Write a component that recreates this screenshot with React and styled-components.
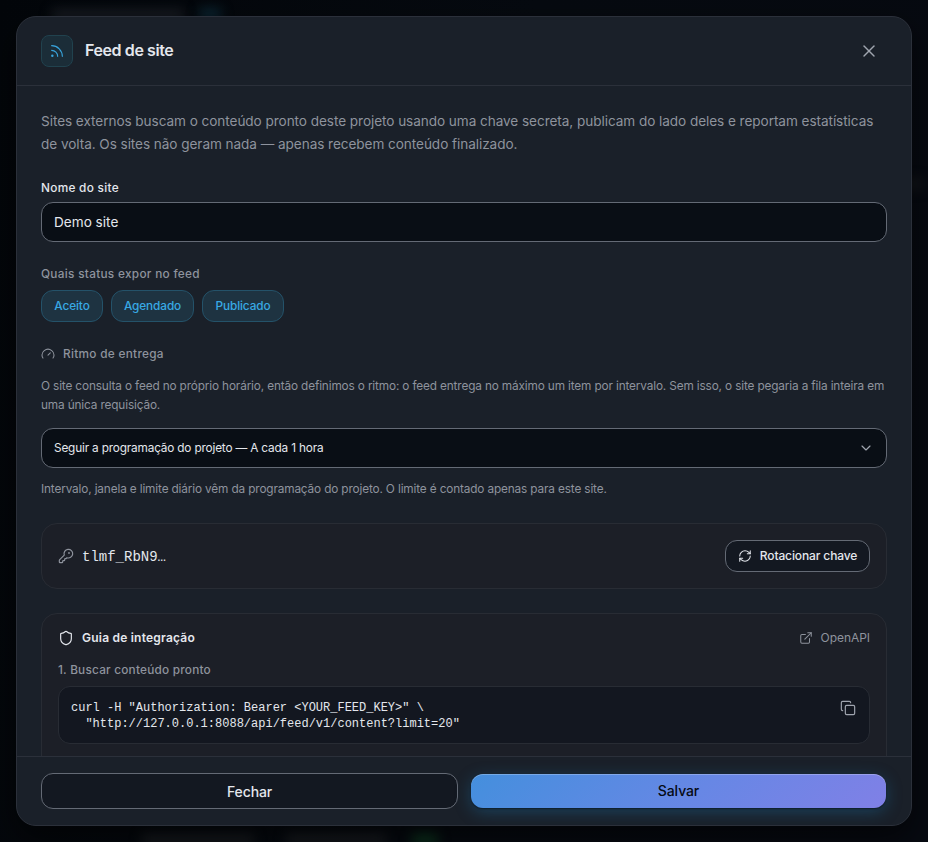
import styled, { createGlobalStyle, css } from "styled-components";
import {
  ChevronDown,
  Copy,
  ExternalLink,
  Gauge,
  KeyRound,
  RefreshCw,
  Rss,
  Shield,
  X,
} from "lucide-react";

const GlobalStyle = createGlobalStyle`
  * {
    box-sizing: border-box;
  }

  body {
    margin: 0;
    background-color: #05080e;
    color: #e4e7ed;
    font-family: Inter, "Liberation Sans", sans-serif;
    -webkit-font-smoothing: antialiased;
  }

  p, h2, h3, pre {
    margin: 0;
  }

  button, input {
    font-family: inherit;
  }
`;

const Backdrop = styled.div`
  position: relative;
  height: 842px;
  padding: 16px;
  overflow: hidden;
  background: linear-gradient(100deg, #03060a 0%, #060a10 50%, #070a11 100%);
`;

const Smudge = styled.div`
  position: absolute;
  top: ${(props) => props.$top}px;
  left: ${(props) => props.$left}px;
  width: ${(props) => props.$width}px;
  height: 10px;
  background-color: ${(props) => props.$color};
  filter: blur(6px);
`;

const Dialog = styled.div`
  position: relative;
  display: flex;
  flex-direction: column;
  height: 810px;
  overflow: hidden;
  border: 1px solid #2b303a;
  border-radius: 20px;
  background-color: #1a2029;
  box-shadow: 0 12px 32px rgba(0, 0, 0, 0.6);
`;

const Header = styled.header`
  display: flex;
  flex-shrink: 0;
  align-items: center;
  gap: 12px;
  height: 69px;
  padding: 0 24px;
  border-bottom: 1px solid #2b303a;
`;

const IconTile = styled.span`
  display: grid;
  place-items: center;
  width: 32px;
  height: 32px;
  border: 1px solid #21424e;
  border-radius: 8px;
  background-color: #1b2d38;
  color: #38a4dc;
`;

const Title = styled.h2`
  flex: 1;
  padding-bottom: 2px;
  font-size: 16px;
  font-weight: 600;
  letter-spacing: -0.4px;
`;

const IconButton = styled.button`
  display: grid;
  place-items: center;
  width: 36px;
  height: 36px;
  padding: 0;
  border: none;
  background: none;
  color: #a0a5af;
`;

const Body = styled.div`
  display: flex;
  flex: 1;
  flex-direction: column;
  gap: 24px;
  min-height: 0;
  padding: 24px 24px 0;
  overflow: hidden;
`;

const Intro = styled.p`
  height: 46px;
  color: #8e939d;
  font-size: 13.6px;
  line-height: 23px;
  letter-spacing: -0.065px;
  white-space: nowrap;
`;

const Field = styled.div`
  display: flex;
  flex-direction: column;
  gap: ${(props) => props.$gap}px;
`;

const Label = styled.span`
  display: flex;
  align-items: center;
  gap: 8px;
  height: 16px;
  color: ${(props) => (props.$bright ? "#e4e7ed" : "#8e939d")};
  font-size: 11.8px;
  font-weight: 500;
  letter-spacing: 0.3px;
`;

const control = css`
  height: 40px;
  padding: 0 12px;
  border: 1px solid #646a75;
  border-radius: 12px;
  background-color: #090e15;
  color: #e4e7ed;
`;

const Input = styled.input`
  ${control}
  width: 100%;
  font-size: 13.6px;
`;

const Select = styled.button`
  ${control}
  display: flex;
  align-items: center;
  justify-content: space-between;
  font-size: 11.8px;
  letter-spacing: -0.17px;

  svg {
    color: #a0a5af;
  }
`;

const Chips = styled.div`
  display: flex;
  gap: 8px;
`;

const Chip = styled.button`
  width: ${(props) => props.$width}px;
  height: 32px;
  padding: 0;
  border: 1px solid #245269;
  border-radius: 12px;
  background-color: #1e3341;
  color: #38a9e4;
  font-size: 11.8px;
  font-weight: 500;
  letter-spacing: -0.1px;
`;

const Note = styled.p`
  color: #8e939d;
  font-size: 11.8px;
  line-height: 19.5px;
  letter-spacing: -0.143px;
  white-space: nowrap;
`;

const Rhythm = styled.div`
  display: flex;
  flex-direction: column;

  ${Note} {
    margin-top: 14.5px;
  }

  ${Select} {
    margin-top: 12.5px;
  }

  ${Select} + ${Note} {
    margin: 12px 0 -1px;
  }
`;

const Card = styled.section`
  flex-shrink: 0;
  padding: 16px;
  border: 1px solid #282c34;
  border-radius: 16px;
  background-color: #1c1f27;
`;

const KeyCard = styled(Card)`
  display: flex;
  align-items: center;
  gap: 8px;
  height: 66px;

  > svg {
    color: #8e939d;
  }
`;

const GuideCard = styled(Card)`
  padding-bottom: 40px;
`;

const KeyValue = styled.code`
  flex: 1;
  padding-top: 2px;
  font-family: "Liberation Mono", monospace;
  font-size: 14px;
`;

const OutlineButton = styled.button`
  display: flex;
  align-items: center;
  justify-content: center;
  gap: 8px;
  height: 32px;
  width: 145px;
  padding: 0;
  border: 1px solid #646a75;
  border-radius: 12px;
  background-color: #131821;
  color: #e4e7ed;
  font-size: 12px;
  font-weight: 500;
  letter-spacing: -0.12px;
  white-space: nowrap;
`;

const GuideHeader = styled.div`
  display: flex;
  align-items: center;
  gap: 8px;
  height: 16px;
`;

const GuideTitle = styled.h3`
  flex: 1;
  font-size: 12px;
  font-weight: 600;
  letter-spacing: 0.22px;
`;

const GuideLink = styled.a`
  display: flex;
  align-items: center;
  gap: 8px;
  color: #8e939d;
  font-size: 12px;
  letter-spacing: -0.05px;
`;

const Step = styled.p`
  margin: 16px 0 8px;
  color: #8e939d;
  font-size: 11.8px;
  font-weight: 500;
  line-height: 16px;
  letter-spacing: 0.22px;
`;

const CodeBlock = styled.div`
  display: flex;
  justify-content: space-between;
  height: 58px;
  padding: 12px 13px 12px 12px;
  border: 1px solid #282c34;
  border-radius: 12px;
  background-color: #131720;

  svg {
    margin: 1px 0 0;
    color: #a0a5af;
  }
`;

const Code = styled.pre`
  padding-top: 1px;
  font-family: "Liberation Mono", monospace;
  font-size: 12px;
  line-height: 16px;
`;

const Footer = styled.footer`
  display: grid;
  flex-shrink: 0;
  grid-template-columns: 417px 415px;
  gap: 13px;
  align-items: center;
  height: 69px;
  padding: 0 24px;
  border-top: 1px solid #2b303a;
`;

const CloseButton = styled(OutlineButton)`
  width: 100%;
  height: 36px;
  font-size: 14px;
`;

const SaveButton = styled.button`
  height: 34px;
  padding-bottom: 2px;
  border: none;
  border-radius: 12px;
  background: linear-gradient(135deg, #448fdd, #6787e5 55%, #8080e6);
  box-shadow:
    inset 0 1px 0 rgba(255, 255, 255, 0.25),
    0 1px 2px rgba(0, 0, 0, 0.5),
    0 4px 16px rgba(28, 130, 190, 0.35);
  color: #060b14;
  font-size: 14px;
  font-weight: 500;
  letter-spacing: -0.1px;
`;

const statuses = [
  { name: "Aceito", width: 62 },
  { name: "Agendado", width: 83 },
  { name: "Publicado", width: 82 },
];

const snippet = `curl -H "Authorization: Bearer <YOUR_FEED_KEY>" \\
  "http://127.0.0.1:8088/api/feed/v1/content?limit=20"`;

export default function App() {
  return (
    <>
      <GlobalStyle />
      <Backdrop>
        <Smudge $top={10} $left={52} $width={132} $color="#1b1f26" />
        <Smudge $top={9} $left={199} $width={22} $color="#0c2a38" />
        <Smudge $top={179} $left={900} $width={24} $color="#15171b" />
        <Smudge $top={834} $left={142} $width={112} $color="#1b1e22" />
        <Smudge $top={834} $left={286} $width={100} $color="#1b1e22" />
        <Smudge $top={834} $left={412} $width={26} $color="#0d3a20" />
        <Dialog role="dialog">
          <Header>
            <IconTile>
              <Rss size={16} strokeWidth={1.75} />
            </IconTile>
            <Title>Feed de site</Title>
            <IconButton aria-label="Fechar">
              <X size={20} strokeWidth={1.75} />
            </IconButton>
          </Header>
          <Body>
            <Intro>
              Sites externos buscam o conteúdo pronto deste projeto usando uma
              chave secreta, publicam do lado deles e reportam estatísticas
              <br />
              de volta. Os sites não geram nada — apenas recebem conteúdo
              finalizado.
            </Intro>
            <Field $gap={6}>
              <Label $bright>Nome do site</Label>
              <Input defaultValue="Demo site" />
            </Field>
            <Field $gap={8}>
              <Label>Quais status expor no feed</Label>
              <Chips>
                {statuses.map(({ name, width }) => (
                  <Chip key={name} $width={width}>
                    {name}
                  </Chip>
                ))}
              </Chips>
            </Field>
            <Rhythm>
              <Label>
                <Gauge size={14} strokeWidth={1.75} />
                Ritmo de entrega
              </Label>
              <Note>
                O site consulta o feed no próprio horário, então definimos o
                ritmo: o feed entrega no máximo um item por intervalo. Sem isso,
                o site pegaria a fila inteira em
                <br />
                uma única requisição.
              </Note>
              <Select>
                Seguir a programação do projeto — A cada 1 hora
                <ChevronDown size={16} strokeWidth={1.75} />
              </Select>
              <Note>
                Intervalo, janela e limite diário vêm da programação do projeto.
                O limite é contado apenas para este site.
              </Note>
            </Rhythm>
            <KeyCard>
              <KeyRound size={16} strokeWidth={1.75} />
              <KeyValue>tlmf_RbN9…</KeyValue>
              <OutlineButton>
                <RefreshCw size={14} strokeWidth={1.75} />
                Rotacionar chave
              </OutlineButton>
            </KeyCard>
            <GuideCard>
              <GuideHeader>
                <Shield size={16} strokeWidth={1.75} />
                <GuideTitle>Guia de integração</GuideTitle>
                <GuideLink>
                  <ExternalLink size={14} strokeWidth={1.75} />
                  OpenAPI
                </GuideLink>
              </GuideHeader>
              <Step>1. Buscar conteúdo pronto</Step>
              <CodeBlock>
                <Code>{snippet}</Code>
                <Copy size={16} strokeWidth={1.75} />
              </CodeBlock>
            </GuideCard>
          </Body>
          <Footer>
            <CloseButton>Fechar</CloseButton>
            <SaveButton>Salvar</SaveButton>
          </Footer>
        </Dialog>
      </Backdrop>
    </>
  );
}
